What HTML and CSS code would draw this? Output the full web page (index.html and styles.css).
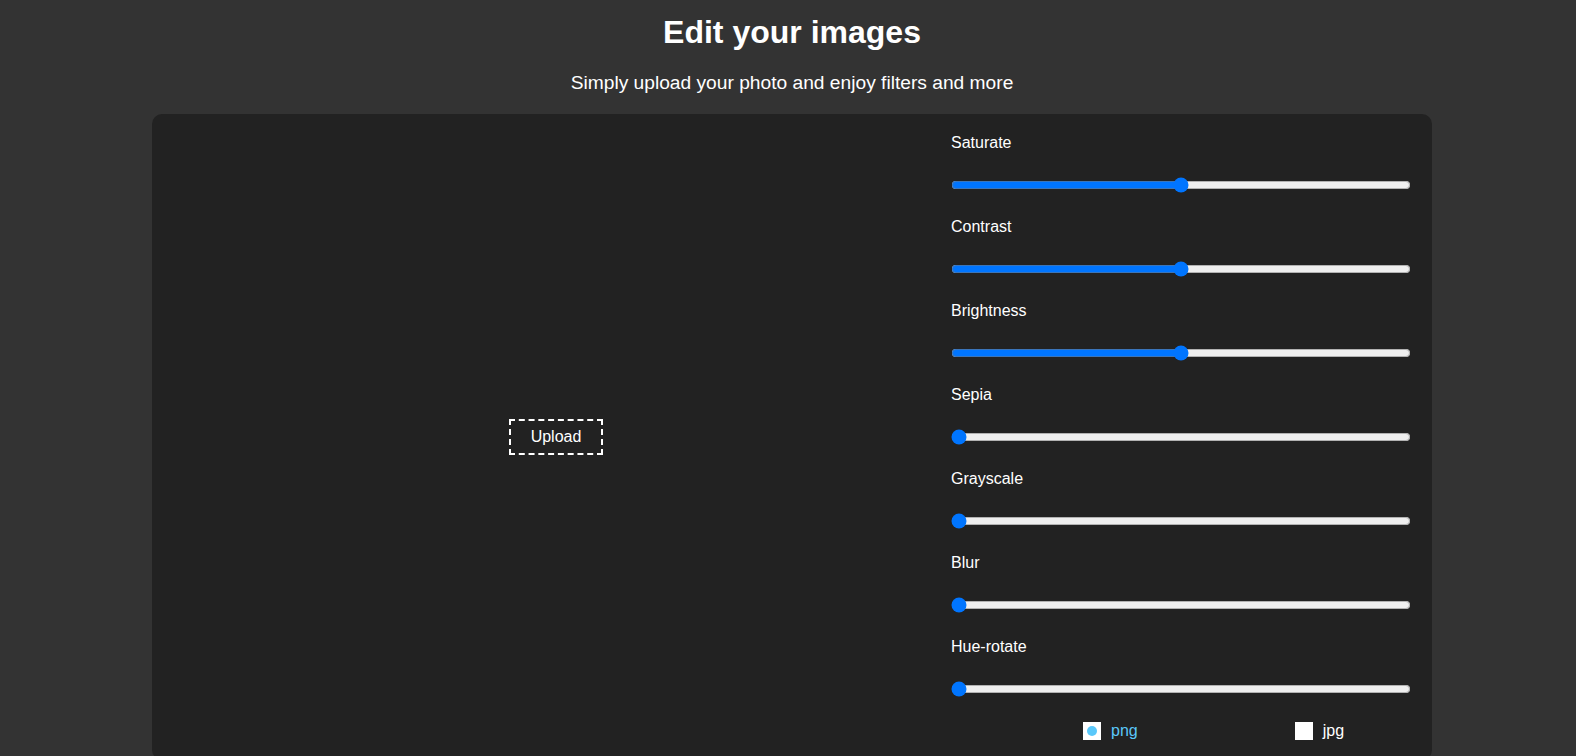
FILE: index.html
```html
<!DOCTYPE html>
<html lang="en">
<head>
<meta charset="utf-8">
<title>Edit your images</title>
<link rel="stylesheet" href="styles.css">
</head>
<body>
<header class="hero">
  <h1 class="title">Edit your images</h1>
  <p class="subtitle">Simply upload your photo and enjoy filters and more</p>
</header>
<main class="editor">
  <section class="preview">
    <button class="upload" type="button">Upload</button>
  </section>
  <section class="controls">
    <div class="row"><label class="label" for="saturate">Saturate</label><input class="slider" id="saturate" type="range" min="0" max="200" value="100"></div>
    <div class="row"><label class="label" for="contrast">Contrast</label><input class="slider" id="contrast" type="range" min="0" max="200" value="100"></div>
    <div class="row"><label class="label" for="brightness">Brightness</label><input class="slider" id="brightness" type="range" min="0" max="200" value="100"></div>
    <div class="row"><label class="label" for="sepia">Sepia</label><input class="slider" id="sepia" type="range" min="0" max="100" value="0"></div>
    <div class="row"><label class="label" for="grayscale">Grayscale</label><input class="slider" id="grayscale" type="range" min="0" max="100" value="0"></div>
    <div class="row"><label class="label" for="blur">Blur</label><input class="slider" id="blur" type="range" min="0" max="10" value="0"></div>
    <div class="row"><label class="label" for="hue">Hue-rotate</label><input class="slider" id="hue" type="range" min="0" max="360" value="0"></div>
    <div class="formats">
      <label class="format active"><span class="box"><span class="dot"></span></span><span class="ftext">png</span></label>
      <label class="format"><span class="box"></span><span class="ftext">jpg</span></label>
    </div>
  </section>
</main>
</body>
</html>
```

FILE: styles.css
```css
html, body {
  background: #333333;
}
body {
  margin: 0;
  padding: 0 0 0 8px;
  font-family: "Liberation Sans", Arial, sans-serif;
  color: #ffffff;
  overflow: hidden;
}
.hero {
  text-align: center;
}
.title {
  margin: 14px 0 0;
  font-size: 32px;
  line-height: 37px;
  font-weight: bold;
}
.subtitle {
  margin: 21px 0 20px;
  font-size: 19.2px;
  line-height: 22px;
}
.editor {
  width: 1280px;
  margin: 0 auto;
  background: #222222;
  border-radius: 10px;
  display: flex;
}
.preview {
  flex: 1;
  display: flex;
  align-items: center;
  justify-content: center;
  padding-left: 9px;
}
.upload {
  font-family: "Liberation Sans", Arial, sans-serif;
  font-size: 16px;
  line-height: 19px;
  color: #ffffff;
  background: transparent;
  border: 2px dashed #ffffff;
  padding: 6px 20px 7px;
  border-radius: 0;
}
.controls {
  width: 460px;
  padding: 20px 21px 20px 0;
  display: flex;
  flex-direction: column;
  gap: 25px;
}
.row {
  display: flex;
  flex-direction: column;
  gap: 25px;
}
.label {
  font-size: 16px;
  line-height: 18px;
}
.slider {
  width: 460px;
  height: 16px;
  margin: 0;
  accent-color: #0075ff;
}
.formats {
  display: flex;
  padding-left: 132px;
  gap: 157px;
  height: 18px;
}
.format {
  display: flex;
  align-items: center;
  gap: 10px;
  font-size: 16px;
  line-height: 18px;
  color: #ffffff;
}
.format.active {
  color: #5ac8fa;
}
.box {
  width: 18px;
  height: 18px;
  background: #ffffff;
  display: flex;
  align-items: center;
  justify-content: center;
}
.dot {
  width: 10px;
  height: 10px;
  border-radius: 50%;
  background: #5ac8fa;
}
```
